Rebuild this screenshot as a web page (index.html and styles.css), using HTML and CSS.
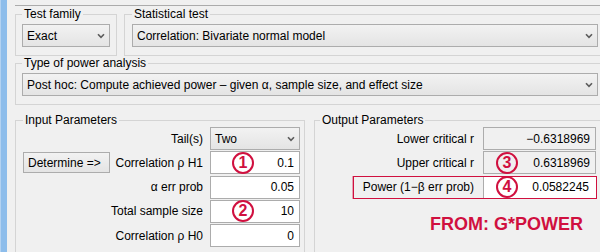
FILE: index.html
```html
<!DOCTYPE html>
<html lang="en">
<head>
  <meta charset="UTF-8">
  <title>G*Power</title>
  <link rel="stylesheet" href="styles.css">
</head>
<body>

  <div class="window">
    <div class="stripe"></div>

    <div class="content">
      <div class="top-row">
        <fieldset class="group family">
          <legend>Test family</legend>
          <div class="combo">
            <span>Exact</span>
            <svg class="chev" width="8" height="6" viewBox="0 0 8 6"><path d="M1 1.2 L4 4.4 L7 1.2" /></svg>
          </div>
        </fieldset>
        <fieldset class="group stat">
          <legend>Statistical test</legend>
          <div class="combo">
            <span>Correlation: Bivariate normal model</span>
            <svg class="chev" width="8" height="6" viewBox="0 0 8 6"><path d="M1 1.2 L4 4.4 L7 1.2" /></svg>
          </div>
        </fieldset>
      </div>

      <fieldset class="group analysis">
        <legend>Type of power analysis</legend>
        <div class="combo">
          <span>Post hoc: Compute achieved power – given α, sample size, and effect size</span>
          <svg class="chev" width="8" height="6" viewBox="0 0 8 6"><path d="M1 1.2 L4 4.4 L7 1.2" /></svg>
        </div>
      </fieldset>

      <div class="params">
        <fieldset class="group input">
          <legend>Input Parameters</legend>

          <div class="prow">
            <span class="lbl">Tail(s)</span>
            <div class="combo small">
              <span>Two</span>
              <svg class="chev" width="8" height="6" viewBox="0 0 8 6"><path d="M1 1.2 L4 4.4 L7 1.2" /></svg>
            </div>
          </div>

          <div class="prow">
            <button class="determine">Determine =&gt;</button>
            <span class="lbl">Correlation ρ H1</span>
            <div class="field"><span class="mark">1</span><span class="val">0.1</span></div>
          </div>

          <div class="prow">
            <span class="lbl">α err prob</span>
            <div class="field"><span class="val">0.05</span></div>
          </div>

          <div class="prow">
            <span class="lbl">Total sample size</span>
            <div class="field"><span class="mark">2</span><span class="val">10</span></div>
          </div>

          <div class="prow">
            <span class="lbl">Correlation ρ H0</span>
            <div class="field"><span class="val">0</span></div>
          </div>
        </fieldset>

        <fieldset class="group output">
          <legend>Output Parameters</legend>

          <div class="orow">
            <span class="lbl">Lower critical r</span>
            <div class="obox"><span class="val">−0.6318969</span></div>
          </div>

          <div class="orow">
            <span class="lbl">Upper critical r</span>
            <div class="obox"><span class="mark">3</span><span class="val">0.6318969</span></div>
          </div>

          <div class="orow power">
            <span class="lbl">Power (1−β err prob)</span>
            <div class="obox"><span class="mark">4</span><span class="val">0.0582245</span></div>
          </div>

          <div class="source">FROM: G*POWER</div>
        </fieldset>
      </div>
    </div>
  </div>

</body>
</html>
```

FILE: styles.css
```css
* {
  box-sizing: border-box;
}

html, body {
  margin: 0;
}

body {
  width: 600px;
  height: 252px;
  overflow: hidden;
  background: #f0f0f0;
  font-family: "Liberation Sans", Arial, sans-serif;
  font-size: 12px;
  color: #000;
}

.window {
  display: flex;
  height: 252px;
}

.stripe {
  flex: none;
  width: 7px;
  background: #8dbdeb;
  border-left: 1px solid #b3d2f1;
}

.content {
  flex: none;
  width: 590px;
  margin-left: 8px;
  margin-top: 5px;
  padding-top: 1px;
  border-top: 1px solid #ababab;
}

/* group boxes */
.group {
  margin: 0;
  min-width: 0;
  border: 1px solid #d4d4d4;
  padding: 2px 6px 8px 6px;
}

.group legend {
  padding: 0 2px;
  line-height: 15px;
}

.top-row {
  display: flex;
  gap: 7px;
}

.family {
  width: 102px;
  flex: none;
}

.stat {
  flex: 1;
  padding-left: 7px;
}

.analysis {
  width: 100%;
}

.params {
  display: flex;
  gap: 9px;
  margin-top: 8px;
}

.params legend {
  margin-bottom: -1px;
}

.input {
  width: 290px;
  flex: none;
  padding: 0 4px 8px 7px;
}

.output {
  flex: 1;
  padding: 0 8px 8px 5px;
}

/* combo boxes */
.combo {
  display: flex;
  align-items: center;
  height: 23px;
  padding: 0 4px;
  border: 1px solid #acacac;
  background: linear-gradient(#f2f2f2, #e4e4e4);
  white-space: nowrap;
}

.combo .chev {
  margin-left: auto;
  flex: none;
}

.chev path {
  fill: none;
  stroke: #5c5c5c;
  stroke-width: 1.6;
}

.combo.small {
  width: 90px;
  flex: none;
}

/* parameter rows */
.prow, .orow {
  display: flex;
  align-items: center;
  height: 23px;
  margin-bottom: 1.3px;
}

.lbl {
  flex: 1;
  text-align: right;
  white-space: nowrap;
}

.prow .lbl {
  margin-right: 7px;
}

.orow .lbl {
  margin-right: 9px;
}

.determine {
  flex: none;
  width: 87px;
  height: 21px;
  margin: 0;
  padding: 0 0 0 4px;
  text-align: left;
  font: inherit;
  color: #000;
  border: 1px solid #acacac;
  background: linear-gradient(#f2f2f2, #e4e4e4);
}

.field, .obox {
  flex: none;
  display: flex;
  align-items: center;
  height: 23px;
  border: 1px solid #acacac;
  padding: 0 5px;
}

.field {
  width: 90px;
  background: #fff;
}

.obox {
  width: 113px;
}

.val {
  margin-left: auto;
}

.mark {
  flex: none;
  width: 22px;
  height: 22px;
  border: 2px solid #d0103f;
  border-radius: 50%;
  color: #d0103f;
  font-weight: bold;
  font-size: 16px;
  line-height: 18px;
  text-align: center;
}

.field .mark {
  margin-left: 16px;
}

.obox .mark {
  margin-left: 7px;
}

.orow.power {
  margin-top: 1.4px;
  margin-left: 33px;
  margin-right: -1px;
  border: 1px solid #d0103f;
  box-shadow: -1px 0 0 rgba(208, 16, 63, 0.35);
}

.power .obox {
  height: 21px;
  border: none;
  border-left: 1px solid #acacac;
  background: #fff;
  padding-right: 7px;
}

.source {
  margin-top: 15px;
  padding-right: 13px;
  text-align: right;
  color: #d0103f;
  font-weight: bold;
  font-size: 18px;
  line-height: 21px;
}
```
